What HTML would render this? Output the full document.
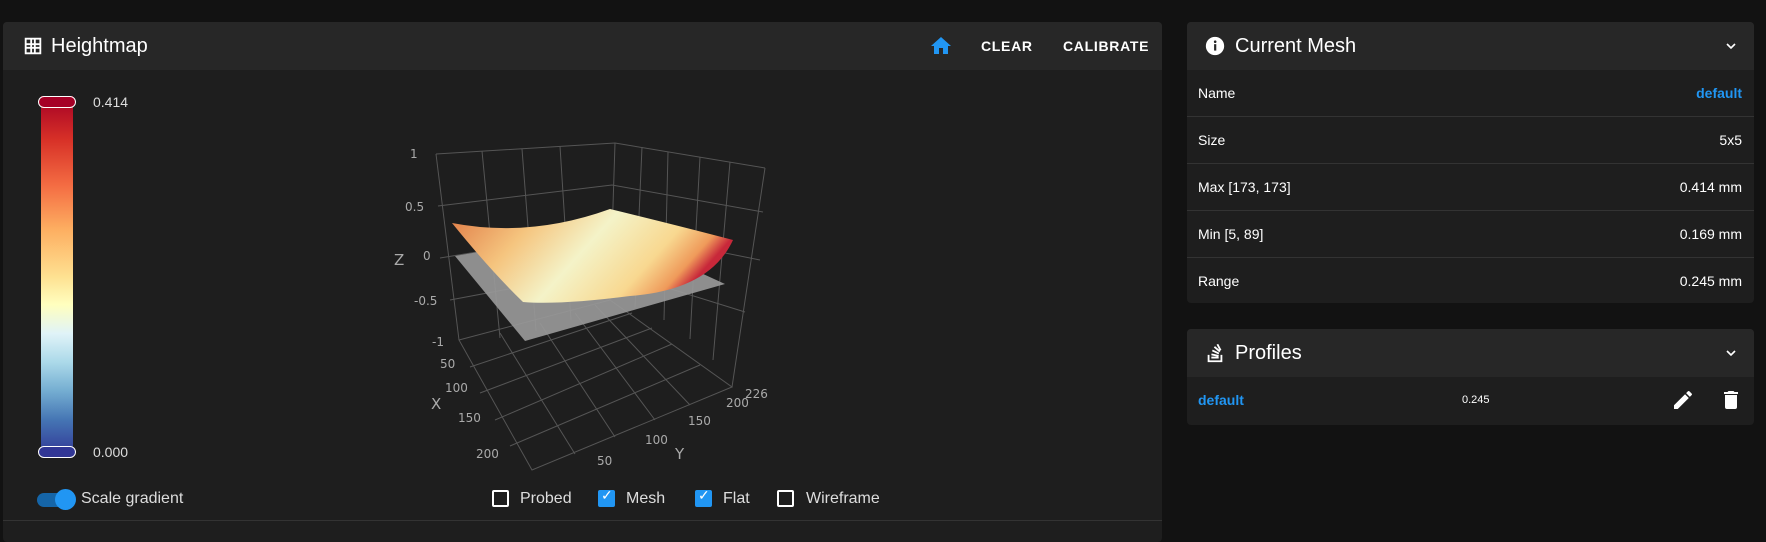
<!DOCTYPE html>
<html><head><meta charset="utf-8"><style>
*{box-sizing:border-box;margin:0;padding:0}
body{width:1766px;height:528px;background:#121212;font-family:"Liberation Sans",Roboto,sans-serif;color:#fff;position:relative;overflow:hidden}
.card{position:absolute;background:#1e1e1e;border-radius:4px;overflow:hidden}
.hdr{position:absolute;left:0;right:0;top:0;height:48px;background:#272727}
.t{position:absolute;white-space:nowrap}
.row{position:absolute;left:0;right:0;height:47px;border-bottom:1px solid #333;font-size:14px}
.row .l{position:absolute;left:11px;top:15px}
.row .r{position:absolute;right:12px;top:15px}
.btn{font-size:14px;font-weight:bold;letter-spacing:0.7px;top:16px}
.cb{position:absolute;width:17px;height:17px;border:2px solid #fff;border-radius:2px;top:490px}
.cb.on{background:#2196f3;border-color:#2196f3}
.lbl{font-size:16px;color:#ddd;top:490px}
</style></head><body>

<div class="card" style="left:3px;top:22px;width:1159px;height:520px">
  <div class="hdr"></div>
  <svg class="t" style="left:19px;top:13px" width="22" height="22" viewBox="0 0 24 24"><path fill="#fff" d="M3 3h18v18H3z M5 5v4h4V5z M11 5v4h2V5z M15 5v4h4V5z M5 11v2h4v-2z M11 11v2h2v-2z M15 11v2h4v-2z M5 15v4h4v-4z M11 15v4h2v-4z M15 15v4h4v-4z" fill-rule="evenodd"/></svg>
  <div class="t" style="left:48px;top:13px;font-size:20px">Heightmap</div>
  <svg class="t" style="left:926px;top:12px" width="24" height="24" viewBox="0 0 24 24"><path fill="#2196f3" d="M10 20v-6h4v6h5v-8h3L12 3 2 12h3v8z"/></svg>
  <div class="t btn" style="left:978px">CLEAR</div>
  <div class="t btn" style="left:1060px">CALIBRATE</div>
  <div class="t" style="left:0;right:0;top:498px;height:1px;background:#333"></div>
</div>

<div class="t" style="left:41px;top:96px;width:32px;height:360px;background:linear-gradient(#a50026,#d73027 12%,#f46d43 25%,#fdae61 37%,#fee090 50%,#ffffbf 58%,#e0f3f8 66%,#abd9e9 74%,#74add1 82%,#4575b4 90%,#313695)"></div>
<div class="t" style="left:38px;top:96px;width:38px;height:12px;background:#a50026;border:1.5px solid #fff;border-radius:6px"></div>
<div class="t" style="left:38px;top:446px;width:38px;height:12px;background:#313695;border:1.5px solid #fff;border-radius:6px"></div>
<div class="t" style="left:93px;top:94px;font-size:14px;color:#ddd">0.414</div>
<div class="t" style="left:93px;top:444px;font-size:14px;color:#ddd">0.000</div>

<svg class="t" style="left:0;top:0" width="1766" height="528">
<defs>
<linearGradient id="sg" x1="0" y1="0" x2="1" y2="0.3">
<stop offset="0" stop-color="#e07a45"/><stop offset="0.3" stop-color="#f5c47e"/><stop offset="0.55" stop-color="#f4f3c8"/><stop offset="0.8" stop-color="#f8d890"/><stop offset="0.93" stop-color="#ef9a5a"/><stop offset="1" stop-color="#c8283a"/>
</linearGradient>
</defs>
<g stroke="#555" stroke-width="1" fill="none">
<path d="M436 154L615 143L765 168"/>
<path d="M438 206L612 185L763 212"/>
<path d="M440 258L611 230L760 260"/>
<path d="M450 300L610 270L745 312"/>
<path d="M436 154L459 340M615 143L610 300M765 168L732 387"/>
<path d="M482 151L500 338M522 149L536 331M560 146L571 320M642 147L635 308M668 152L664 320M700 157L690 339M730 162L713 360"/>
<path d="M459 340L610 300L732 387L532 470Z"/>
<path d="M470 367L632 313M480 393L652 328M495 420L672 344M510 446L700 365"/>
<path d="M500 333L575 454M540 323L615 437M575 313L655 420M595 305L690 405"/>
</g>
<path d="M455 256L607 230L725 284L525 341Z" fill="#9a9a9a" opacity="0.9"/>
<path d="M452 223Q530 238 610 209Q680 226 733 240Q710 290 630 296Q560 305 523 302Q490 270 452 223Z" fill="url(#sg)"/>
<g fill="#aaa" font-size="12" font-family="DejaVu Sans,sans-serif">
<text x="410" y="158">1</text><text x="405" y="211">0.5</text><text x="423" y="260">0</text><text x="414" y="305">-0.5</text><text x="432" y="346">-1</text>
<text x="440" y="368">50</text><text x="445" y="392">100</text><text x="458" y="422">150</text><text x="476" y="458">200</text>
<text x="597" y="465">50</text><text x="645" y="444">100</text><text x="688" y="425">150</text><text x="726" y="407">200</text><text x="745" y="398">226</text>
<text x="394" y="265" font-size="15">Z</text><text x="431" y="409" font-size="15">X</text><text x="675" y="459" font-size="15">Y</text>
</g>
</svg>

<div class="t" style="left:37px;top:493px;width:34px;height:14px;border-radius:7px;background:#1565a8"></div>
<div class="t" style="left:55px;top:489px;width:21px;height:21px;border-radius:50%;background:#2196f3"></div>
<div class="t lbl" style="left:81px">Scale gradient</div>
<div class="cb" style="left:492px"></div><div class="t lbl" style="left:520px">Probed</div>
<div class="cb on" style="left:598px"></div><div class="t" style="left:601px;top:487px;color:#fff;font-size:14px">✓</div><div class="t lbl" style="left:626px">Mesh</div>
<div class="cb on" style="left:695px"></div><div class="t" style="left:698px;top:487px;color:#fff;font-size:14px">✓</div><div class="t lbl" style="left:723px">Flat</div>
<div class="cb" style="left:777px"></div><div class="t lbl" style="left:806px">Wireframe</div>

<div class="card" style="left:1187px;top:22px;width:567px;height:281px">
  <div class="hdr"></div>
  <svg class="t" style="left:17px;top:13px" width="22" height="22" viewBox="0 0 24 24"><circle cx="12" cy="12" r="10" fill="#fff"/><rect x="11" y="10" width="2.4" height="7" fill="#272727"/><circle cx="12.2" cy="7.3" r="1.4" fill="#272727"/></svg>
  <div class="t" style="left:48px;top:13px;font-size:20px">Current Mesh</div>
  <svg class="t" style="left:536px;top:16px" width="16" height="16" viewBox="0 0 24 24"><path d="M6 9l6 6 6-6" stroke="#fff" stroke-width="2.5" fill="none"/></svg>
  <div class="row" style="top:48px"><span class="l">Name</span><span class="r" style="color:#2196f3;font-weight:bold">default</span></div>
  <div class="row" style="top:95px"><span class="l">Size</span><span class="r">5x5</span></div>
  <div class="row" style="top:142px"><span class="l">Max [173, 173]</span><span class="r">0.414 mm</span></div>
  <div class="row" style="top:189px"><span class="l">Min [5, 89]</span><span class="r">0.169 mm</span></div>
  <div class="row" style="top:236px;border:0"><span class="l">Range</span><span class="r">0.245 mm</span></div>
</div>

<div class="card" style="left:1187px;top:329px;width:567px;height:96px">
  <div class="hdr"></div>
  <svg class="t" style="left:17px;top:13px" width="22" height="22" viewBox="0 0 24 24"><path fill="#fff" d="M4 14h2v6h12v-6h2v8H4z M8 16h8v2H8z M8.3 12.5l7.8 1.7-.4 2-7.8-1.7z M9.5 8.3l7.2 3.4-.8 1.8-7.2-3.4z M12 4.5l6 5.2-1.3 1.5-6-5.2z M15.5 2l3.5 6.6-1.8.9-3.5-6.6z"/></svg>
  <div class="t" style="left:48px;top:13px;font-size:20px">Profiles</div>
  <svg class="t" style="left:536px;top:16px" width="16" height="16" viewBox="0 0 24 24"><path d="M6 9l6 6 6-6" stroke="#fff" stroke-width="2.5" fill="none"/></svg>
  <div class="t" style="left:11px;top:63px;font-size:14px;color:#2196f3;font-weight:bold">default</div>
  <div class="t" style="left:275px;top:65px;font-size:11px">0.245</div>
  <svg class="t" style="left:484px;top:59px" width="24" height="24" viewBox="0 0 24 24"><path fill="#fff" d="M3 17.25V21h3.75L17.8 9.94l-3.75-3.75zM20.7 7.04a1 1 0 000-1.41l-2.34-2.34a1 1 0 00-1.41 0l-1.83 1.83 3.75 3.75z"/></svg>
  <svg class="t" style="left:532px;top:59px" width="24" height="24" viewBox="0 0 24 24"><path fill="#fff" d="M6 19a2 2 0 002 2h8a2 2 0 002-2V7H6zM19 4h-3.5l-1-1h-5l-1 1H5v2h14z"/></svg>
</div>
</body></html>
